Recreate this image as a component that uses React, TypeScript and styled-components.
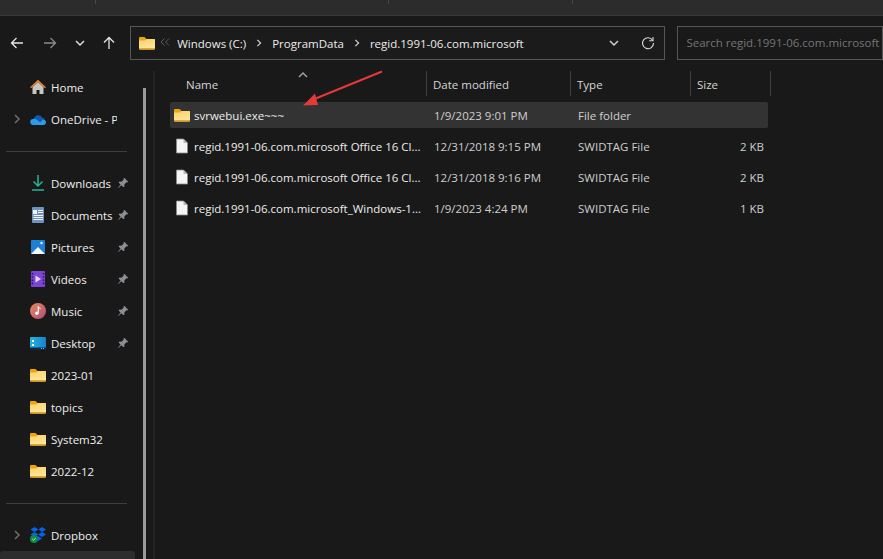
import React from 'react';
import styled, { createGlobalStyle } from 'styled-components';

const GlobalStyle = createGlobalStyle`
    html, body {
        margin: 0;
        padding: 0;
        background: #191919;
    }
    * {
        box-sizing: border-box;
    }
`;

const Window = styled.div`
    position: relative;
    width: 883px;
    height: 559px;
    overflow: hidden;
    background: #191919;
    color: #e8e8e8;
    font-family: 'Open Sans', 'Noto Sans', sans-serif;
    font-size: 11.5px;
`;
const TopStrip = styled.div`
    display: flex;
    height: 16px;
    background: #2c2c2c;
    border-bottom: 1px solid #3c3c3c;
`;
const StripTick = styled.div<{ $w: number }>`
    width: ${(p) => p.$w}px;
    height: 4px;
    border-right: 1px solid #484848;
`;
const NavBar = styled.div`
    display: flex;
    align-items: center;
    height: 55px;
    padding-bottom: 1px;
`;
const NavButton = styled.div<{ $w: number }>`
    display: flex;
    align-items: center;
    justify-content: center;
    width: ${(p) => p.$w}px;
    height: 34px;
`;
const AddressBox = styled.div`
    display: flex;
    align-items: center;
    width: 547px;
    height: 34px;
    margin-left: 6px;
    padding-left: 8px;
    border: 1px solid #565656;
    background: #1b1b1b;
`;
const Crumb = styled.span`
    color: #ececec;
    font-size: 11.5px;
    white-space: nowrap;
`;
const CrumbSep = styled.span`
    display: flex;
    justify-content: center;
    width: 26px;
`;
const AddressEnd = styled.div`
    display: flex;
    align-items: center;
    gap: 22px;
    margin-left: auto;
    padding-right: 9px;
`;
const SearchBox = styled.div`
    width: 210px;
    height: 34px;
    margin-left: 12px;
    padding-left: 8px;
    border: 1px solid #565656;
    color: #757575;
    font-size: 11.5px;
    line-height: 32px;
    white-space: nowrap;
    overflow: hidden;
`;
const Main = styled.div`
    display: flex;
    height: 488px;
`;
const Sidebar = styled.nav`
    width: 143px;
    flex: none;
`;
const NavRow = styled.div<{ $active?: boolean }>`
    display: grid;
    grid-template-columns: 30px 16px 1fr 18px;
    align-items: center;
    width: 135px;
    height: 32px;
    background: ${(p) => (p.$active ? '#2d2d2d' : 'transparent')};
    border-radius: ${(p) => (p.$active ? '3px' : '0')};
`;
const Expander = styled.span`
    display: flex;
    justify-content: center;
    padding-left: 4px;
`;
const IconSlot = styled.span`
    display: flex;
    align-items: center;
    justify-content: center;
    width: 16px;
    height: 16px;
`;
const NavLabel = styled.span`
    padding-left: 5px;
    color: #efefef;
    white-space: nowrap;
    overflow: hidden;
`;
const Rule = styled.div`
    width: 121px;
    height: 1px;
    margin: 16px 0 15px 6px;
    background: #3e3e3e;
`;
const ScrollThumb = styled.div`
    width: 3px;
    flex: none;
    margin-top: 17px;
    background: #9b9b9b;
`;
const Splitter = styled.div`
    width: 2px;
    flex: none;
    margin-left: 7px;
    background: #242424;
`;
const Content = styled.section`
    flex: 1;
    padding-left: 15px;
`;
const columns = '257px 144px 120px 77px';
const HeaderRow = styled.div`
    position: relative;
    display: grid;
    grid-template-columns: 257px 144px 120px 80px;
    width: 601px;
    height: 25px;
`;
const HeaderCell = styled.div<{ $pad: number }>`
    display: flex;
    align-items: center;
    padding-left: ${(p) => p.$pad}px;
    padding-top: 1px;
    border-right: 1px solid #3f3f3f;
    color: #d6d6d6;
`;
const SortCaret = styled.span`
    position: absolute;
    left: 128px;
    top: -1px;
    display: flex;
`;
const FileList = styled.div`
    display: flex;
    flex-direction: column;
    gap: 5px;
    margin-top: 6px;
`;
const FileRow = styled.div<{ $selected?: boolean }>`
    display: grid;
    grid-template-columns: ${columns};
    align-items: center;
    width: 598px;
    height: 26px;
    background: ${(p) => (p.$selected ? '#333333' : 'transparent')};
    border-radius: 2px;
`;
const NameCell = styled.div`
    display: flex;
    align-items: center;
    gap: 4px;
    padding-left: 4px;
    color: #ececec;
    white-space: nowrap;
    overflow: hidden;
`;
const MetaCell = styled.div<{ $right?: boolean }>`
    padding-left: ${(p) => (p.$right ? 0 : 7)}px;
    padding-right: ${(p) => (p.$right ? 4 : 0)}px;
    text-align: ${(p) => (p.$right ? 'right' : 'left')};
    color: #cfcfcf;
    white-space: nowrap;
`;
const Annotation = styled.svg`
    position: absolute;
    left: 296px;
    top: 66px;
`;

function FolderIcon() {
    return (
        <svg width="16" height="14" viewBox="0 0 16 14">
            <defs>
                <linearGradient id="folderFace" x1="0" y1="0" x2="0.3" y2="1">
                    <stop offset="0" stopColor="#f8d26a" />
                    <stop offset="1" stopColor="#ffe59b" />
                </linearGradient>
            </defs>
            <path d="M0 2a1 1 0 0 1 1-1h4.500l2 2h7.500a1 1 0 0 1 1 1v2H0z" fill="#e8a80e" />
            <path d="M0 4.500h6l1.500-1.500H15a1 1 0 0 1 1 1v8.500a1 1 0 0 1-1 1H1a1 1 0 0 1-1-1z" fill="url(#folderFace)" />
            <path d="M0 12.500a1 1 0 0 0 1 1h14a1 1 0 0 0 1-1v-.5H0z" fill="#e5a92a" />
        </svg>
    );
}

function FileIcon() {
    return (
        <svg width="16" height="16" viewBox="0 0 16 16">
            <path d="M2.500 1h7l4 4v10h-11z" fill="#f5f5f5" stroke="#8c8c8c" strokeWidth="0.8" />
            <path d="M9.500 1v4h4z" fill="#b5b5b5" />
        </svg>
    );
}

function Chevron({ dir = 'right', color = '#d0d0d0', size = 8 }: { dir?: string; color?: string; size?: number }) {
    const d = dir === 'right' ? 'M3 1l4 4-4 4' : dir === 'up' ? 'M1 7l4-4 4 4' : 'M1 3l4 4 4-4';
    return (
        <svg width={size} height={size} viewBox="0 0 10 10" fill="none" stroke={color} strokeWidth="1.500">
            <path d={d} />
        </svg>
    );
}

function Arrow({ dir, color }: { dir: 'left' | 'right' | 'up'; color: string }) {
    const d = dir === 'left' ? 'M13 7H1.500M6.500 2l-5 5 5 5' : dir === 'right' ? 'M1 7h11.500M7.500 2l5 5-5 5' : 'M7 13V1.500M2 6.500l5-5 5 5';
    return (
        <svg width="14" height="14" viewBox="0 0 14 14" fill="none" stroke={color} strokeWidth="1.300">
            <path d={d} />
        </svg>
    );
}

function PinIcon() {
    return (
        <svg width="12" height="12" viewBox="0 0 12 12">
            <path d="M7.200.800l4 4-1 .6-.7-.2-2.200 2.200.1 2-.9.900-2-2L1.200 11 1 10.800l2.600-3.300-2-2 .9-.9 2 .1 2.200-2.200-.2-.7z" fill="#8c9094" />
        </svg>
    );
}

function HomeIcon() {
    return (
        <svg width="16" height="16" viewBox="0 0 16 16">
            <path d="M2.500 8L8 3l5.500 5v7h-4v-4h-3v4h-4z" fill="#c9c5c0" />
            <path d="M0 8.200L8 .8l8 7.400-1 1.100L8 3 1 9.300z" fill="#e5812f" />
        </svg>
    );
}

function CloudIcon() {
    return (
        <svg width="16" height="11" viewBox="0 0 16 11">
            <path d="M4 4.500A4.500 4.500 0 0 1 12.500 4 3 3 0 0 1 15 5l-6 3z" fill="#0f5cb8" />
            <path d="M3.500 11A3 3 0 0 1 3 5c2-.8 3 0 4 1l3 2 3-2.500a2.800 2.800 0 0 1 3 2.500c0 1.800-1 3-2.500 3z" fill="#2c9ce8" />
        </svg>
    );
}

function DownloadIcon() {
    return (
        <svg width="14" height="16" viewBox="0 0 14 16" fill="none" stroke="#25b597" strokeWidth="1.500">
            <path d="M7 0v11M2.500 6.500L7 11l4.500-4.500M1 15h12" />
        </svg>
    );
}

function DocumentIcon() {
    return (
        <svg width="12" height="16" viewBox="0 0 12 16">
            <rect width="12" height="16" rx="1" fill="#6f93bd" />
            <rect x="1" y="3" width="4" height="4" fill="#f0f4f8" />
            <path d="M6 3.500h5M6 5.500h5M1.500 8.500h9.500M1.500 10.500h9.500M1.500 12.500h9.500" stroke="#f0f4f8" strokeWidth="1" />
        </svg>
    );
}

function PictureIcon() {
    return (
        <svg width="14" height="14" viewBox="0 0 14 14">
            <rect width="14" height="14" rx="1" fill="#1d7fd6" />
            <path d="M0 14l7-7 7 7z" fill="#f4f8fc" />
            <circle cx="10.500" cy="3" r="1.200" fill="#e8f2fb" />
        </svg>
    );
}

function VideoIcon() {
    return (
        <svg width="14" height="16" viewBox="0 0 14 16">
            <rect width="14" height="16" rx="1" fill="#7c45d8" />
            <path d="M1.500 2v12M12.500 2v12" stroke="#2b1858" strokeWidth="1.600" strokeDasharray="1.600 1.600" />
            <path d="M4.500 4.500L10 8l-5.500 3.500z" fill="#e6daf8" />
        </svg>
    );
}

function MusicIcon() {
    return (
        <svg width="16" height="16" viewBox="0 0 16 16">
            <defs>
                <linearGradient id="musicFace" x1="0" y1="0" x2="1" y2="1">
                    <stop offset="0" stopColor="#e98a5c" />
                    <stop offset="1" stopColor="#b34a78" />
                </linearGradient>
            </defs>
            <circle cx="8" cy="8" r="8" fill="url(#musicFace)" />
            <path d="M8.300 3.500v6.200" stroke="#fff" strokeWidth="1.200" />
            <path d="M8.300 3.500c.5 1.500 2 1.600 2.500 2.600" stroke="#fff" strokeWidth="1" fill="none" />
            <circle cx="6.800" cy="10.200" r="1.700" fill="#fff" />
        </svg>
    );
}

function DesktopIcon() {
    return (
        <svg width="16" height="13" viewBox="0 0 16 13">
            <defs>
                <linearGradient id="desktopFace" x1="0" y1="0" x2="1" y2="0">
                    <stop offset="0" stopColor="#22b5dc" />
                    <stop offset="1" stopColor="#1b7fd0" />
                </linearGradient>
            </defs>
            <rect width="16" height="12" rx="1" fill="url(#desktopFace)" />
            <rect y="10.500" width="16" height="2.500" fill="#12263f" />
            <rect x="2" y="3" width="2" height="2" fill="#fff" />
            <rect x="2" y="7" width="2" height="2" fill="#fff" />
            <rect x="11" y="11" width="1" height="1" fill="#7cc4ee" />
            <rect x="13" y="11" width="1" height="1" fill="#7cc4ee" />
        </svg>
    );
}

function DropboxIcon() {
    return (
        <svg width="16" height="16" viewBox="0 0 16 16">
            <path d="M4.500 0L8.500 2.500 4.500 5 .5 2.500zM12 0l4 2.500L12 5 8.500 2.500zM4.500 5l4 2.500-4 2.500-4-2.500zM12 5l4 2.500-4 2.500-4-2.500zM8 9l4 2.500L8 14l-4-2.500z" fill="#0b62e6" />
            <circle cx="4" cy="12" r="4" fill="#0e8a45" />
            <path d="M2.300 12l1.200 1.200L5.800 11" stroke="#e8f5ec" strokeWidth="0.900" fill="none" />
        </svg>
    );
}

function RefreshIcon() {
    return (
        <svg width="14" height="14" viewBox="0 0 14 14" fill="none" stroke="#d6d6d6" strokeWidth="1.100">
            <path d="M11.800 4.500A5.500 5.500 0 1 0 12.500 7" />
            <path d="M12 1v3.800H8.200" />
        </svg>
    );
}

interface IPlace {
    label: string;
    icon: React.ReactNode;
    pinned?: boolean;
    expandable?: boolean;
}

const cloudPlaces: IPlace[] = [
    { label: 'Home', icon: <HomeIcon /> },
    { label: 'OneDrive - Personal', icon: <CloudIcon />, expandable: true },
];
const quickPlaces: IPlace[] = [
    { label: 'Downloads', icon: <DownloadIcon />, pinned: true },
    { label: 'Documents', icon: <DocumentIcon />, pinned: true },
    { label: 'Pictures', icon: <PictureIcon />, pinned: true },
    { label: 'Videos', icon: <VideoIcon />, pinned: true },
    { label: 'Music', icon: <MusicIcon />, pinned: true },
    { label: 'Desktop', icon: <DesktopIcon />, pinned: true },
    { label: '2023-01', icon: <FolderIcon /> },
    { label: 'topics', icon: <FolderIcon /> },
    { label: 'System32', icon: <FolderIcon /> },
    { label: '2022-12', icon: <FolderIcon /> },
];

const files = [
    { name: 'svrwebui.exe~~~', date: '1/9/2023 9:01 PM', type: 'File folder', size: '', folder: true },
    { name: 'regid.1991-06.com.microsoft Office 16 Cl...', date: '12/31/2018 9:15 PM', type: 'SWIDTAG File', size: '2 KB' },
    { name: 'regid.1991-06.com.microsoft Office 16 Cl...', date: '12/31/2018 9:16 PM', type: 'SWIDTAG File', size: '2 KB' },
    { name: 'regid.1991-06.com.microsoft_Windows-1...', date: '1/9/2023 4:24 PM', type: 'SWIDTAG File', size: '1 KB' },
];

function Place({ place }: { place: IPlace }) {
    return (
        <NavRow>
            <Expander>{place.expandable && <Chevron color="#6e6e6e" size={10} />}</Expander>
            <IconSlot>{place.icon}</IconSlot>
            <NavLabel>{place.label}</NavLabel>
            {place.pinned && <PinIcon />}
        </NavRow>
    );
}

function App() {
    return (
        <Window>
            <GlobalStyle />
            <TopStrip>
                <StripTick $w={96} />
                <StripTick $w={293} />
                <StripTick $w={184} />
            </TopStrip>
            <NavBar>
                <NavButton $w={34}>
                    <Arrow dir="left" color="#e6e6e6" />
                </NavButton>
                <NavButton $w={35}>
                    <Arrow dir="right" color="#8a8a8a" />
                </NavButton>
                <NavButton $w={26}>
                    <Chevron dir="down" color="#dedede" size={10} />
                </NavButton>
                <NavButton $w={32}>
                    <Arrow dir="up" color="#e6e6e6" />
                </NavButton>
                <AddressBox>
                    <FolderIcon />
                    <svg width="10" height="8" viewBox="0 0 10 8" fill="none" stroke="#5c5c5c" strokeWidth="1" style={{ margin: '0 7px 2px 5px' }}>
                        <path d="M4.500 .5L1 4l3.500 3.500M9 .5L5.500 4 9 7.500" />
                    </svg>
                    <Crumb>Windows (C:)</Crumb>
                    <CrumbSep>
                        <Chevron />
                    </CrumbSep>
                    <Crumb>ProgramData</Crumb>
                    <CrumbSep>
                        <Chevron />
                    </CrumbSep>
                    <Crumb>regid.1991-06.com.microsoft</Crumb>
                    <AddressEnd>
                        <Chevron dir="down" size={10} />
                        <RefreshIcon />
                    </AddressEnd>
                </AddressBox>
                <SearchBox>Search regid.1991-06.com.microsoft</SearchBox>
            </NavBar>
            <Main>
                <Sidebar>
                    {cloudPlaces.map((place) => (
                        <Place key={place.label} place={place} />
                    ))}
                    <Rule />
                    {quickPlaces.map((place) => (
                        <Place key={place.label} place={place} />
                    ))}
                    <Rule />
                    <Place place={{ label: 'Dropbox', icon: <DropboxIcon />, expandable: true }} />
                    <NavRow $active />
                </Sidebar>
                <ScrollThumb />
                <Splitter />
                <Content>
                    <HeaderRow>
                        <HeaderCell $pad={16}>Name</HeaderCell>
                        <HeaderCell $pad={6}>Date modified</HeaderCell>
                        <HeaderCell $pad={6}>Type</HeaderCell>
                        <HeaderCell $pad={6}>Size</HeaderCell>
                        <SortCaret>
                            <Chevron dir="up" color="#a0a0a0" size={10} />
                        </SortCaret>
                    </HeaderRow>
                    <FileList>
                        {files.map((file, i) => (
                            <FileRow key={i} $selected={i === 0}>
                                <NameCell>
                                    {file.folder ? <FolderIcon /> : <FileIcon />}
                                    {file.name}
                                </NameCell>
                                <MetaCell>{file.date}</MetaCell>
                                <MetaCell>{file.type}</MetaCell>
                                <MetaCell $right>{file.size}</MetaCell>
                            </FileRow>
                        ))}
                    </FileList>
                </Content>
            </Main>
            <Annotation width="90" height="44" viewBox="0 0 90 44">
                <path d="M86 5.500L16 34" stroke="#e23a3a" strokeWidth="2" />
                <path d="M7 39.500L19 27.500l3 11.500z" fill="#e23a3a" />
            </Annotation>
        </Window>
    );
}

export default App;
